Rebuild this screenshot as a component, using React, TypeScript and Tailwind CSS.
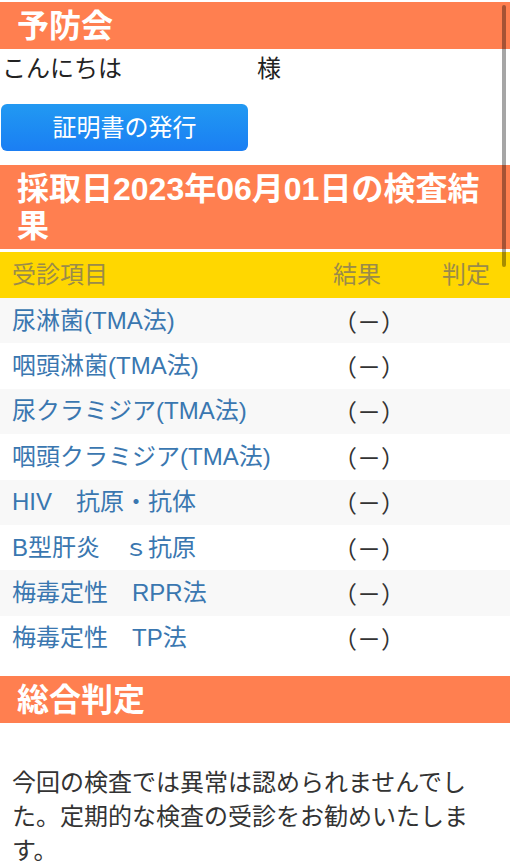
const font = { fontFamily: '"Liberation Sans", "Noto Sans CJK JP", sans-serif' };

const items = [
  "尿淋菌(TMA法)",
  "咽頭淋菌(TMA法)",
  "尿クラミジア(TMA法)",
  "咽頭クラミジア(TMA法)",
  "HIV　抗原・抗体",
  "B型肝炎　ｓ抗原",
  "梅毒定性　RPR法",
  "梅毒定性　TP法",
];

function SectionTitle({ children }: { children: React.ReactNode }) {
  return (
    <h2 className="bg-[#ff7f50] pl-[17px] pr-[17px] pt-[6px] pb-[4px] text-[32px] leading-[37px] font-bold text-white">
      {children}
    </h2>
  );
}

export default function App() {
  return (
    <div className="relative min-h-[866px] w-[510px] overflow-hidden bg-white pt-[2px] text-[#333]" style={font}>
      <SectionTitle>予防会</SectionTitle>

      <div className="h-[40px] pl-[2px] text-[24px] leading-[40px] text-[#222]">
        こんにちは<span className="inline-block w-[135px]" />様
      </div>

      <button className="mt-[15px] ml-px flex h-[47px] w-[247px] items-center justify-center rounded-[6px] bg-gradient-to-b from-[#2299f2] to-[#1b7ef3] text-[24px] text-white">
        証明書の発行
      </button>

      <div className="mt-[14px]">
        <SectionTitle>
          採取日2023年06月01日の検査結果
        </SectionTitle>
      </div>

      <div className="mt-[3px] grid h-[46px] grid-cols-[321px_109px_1fr] items-center bg-[#ffd700] text-[24px] text-[#9a8b4a]">
        <div className="pl-3">受診項目</div>
        <div className="pl-3">結果</div>
        <div className="pl-3">判定</div>
      </div>

      {items.map((name, i) => (
        <div
          key={name}
          className={`grid h-[45.4px] grid-cols-[321px_109px_1fr] items-center text-[24px] ${i % 2 === 0 ? "bg-[#f8f8f8]" : "bg-white"}`}
        >
          <div className="pl-3 text-[#3a77b0]">{name}</div>
          <div className="pl-3 text-[#333]" style={{ fontFamily: '"Noto Sans CJK JP", sans-serif' }}>（－）</div>
          <div />
        </div>
      ))}

      <div className="mt-[15px]">
        <SectionTitle>総合判定</SectionTitle>
      </div>

      <p className="mt-[43px] pl-3 pr-[30px] text-[24px] leading-[34px] text-[#333]">
        今回の検査では異常は認められませんでした。定期的な検査の受診をお勧めいたします。
      </p>

      {/* overlay scrollbar */}
      <div className="absolute right-[4px] top-[5px] h-[262px] w-[4px] rounded-full bg-black/35" />
    </div>
  );
}
